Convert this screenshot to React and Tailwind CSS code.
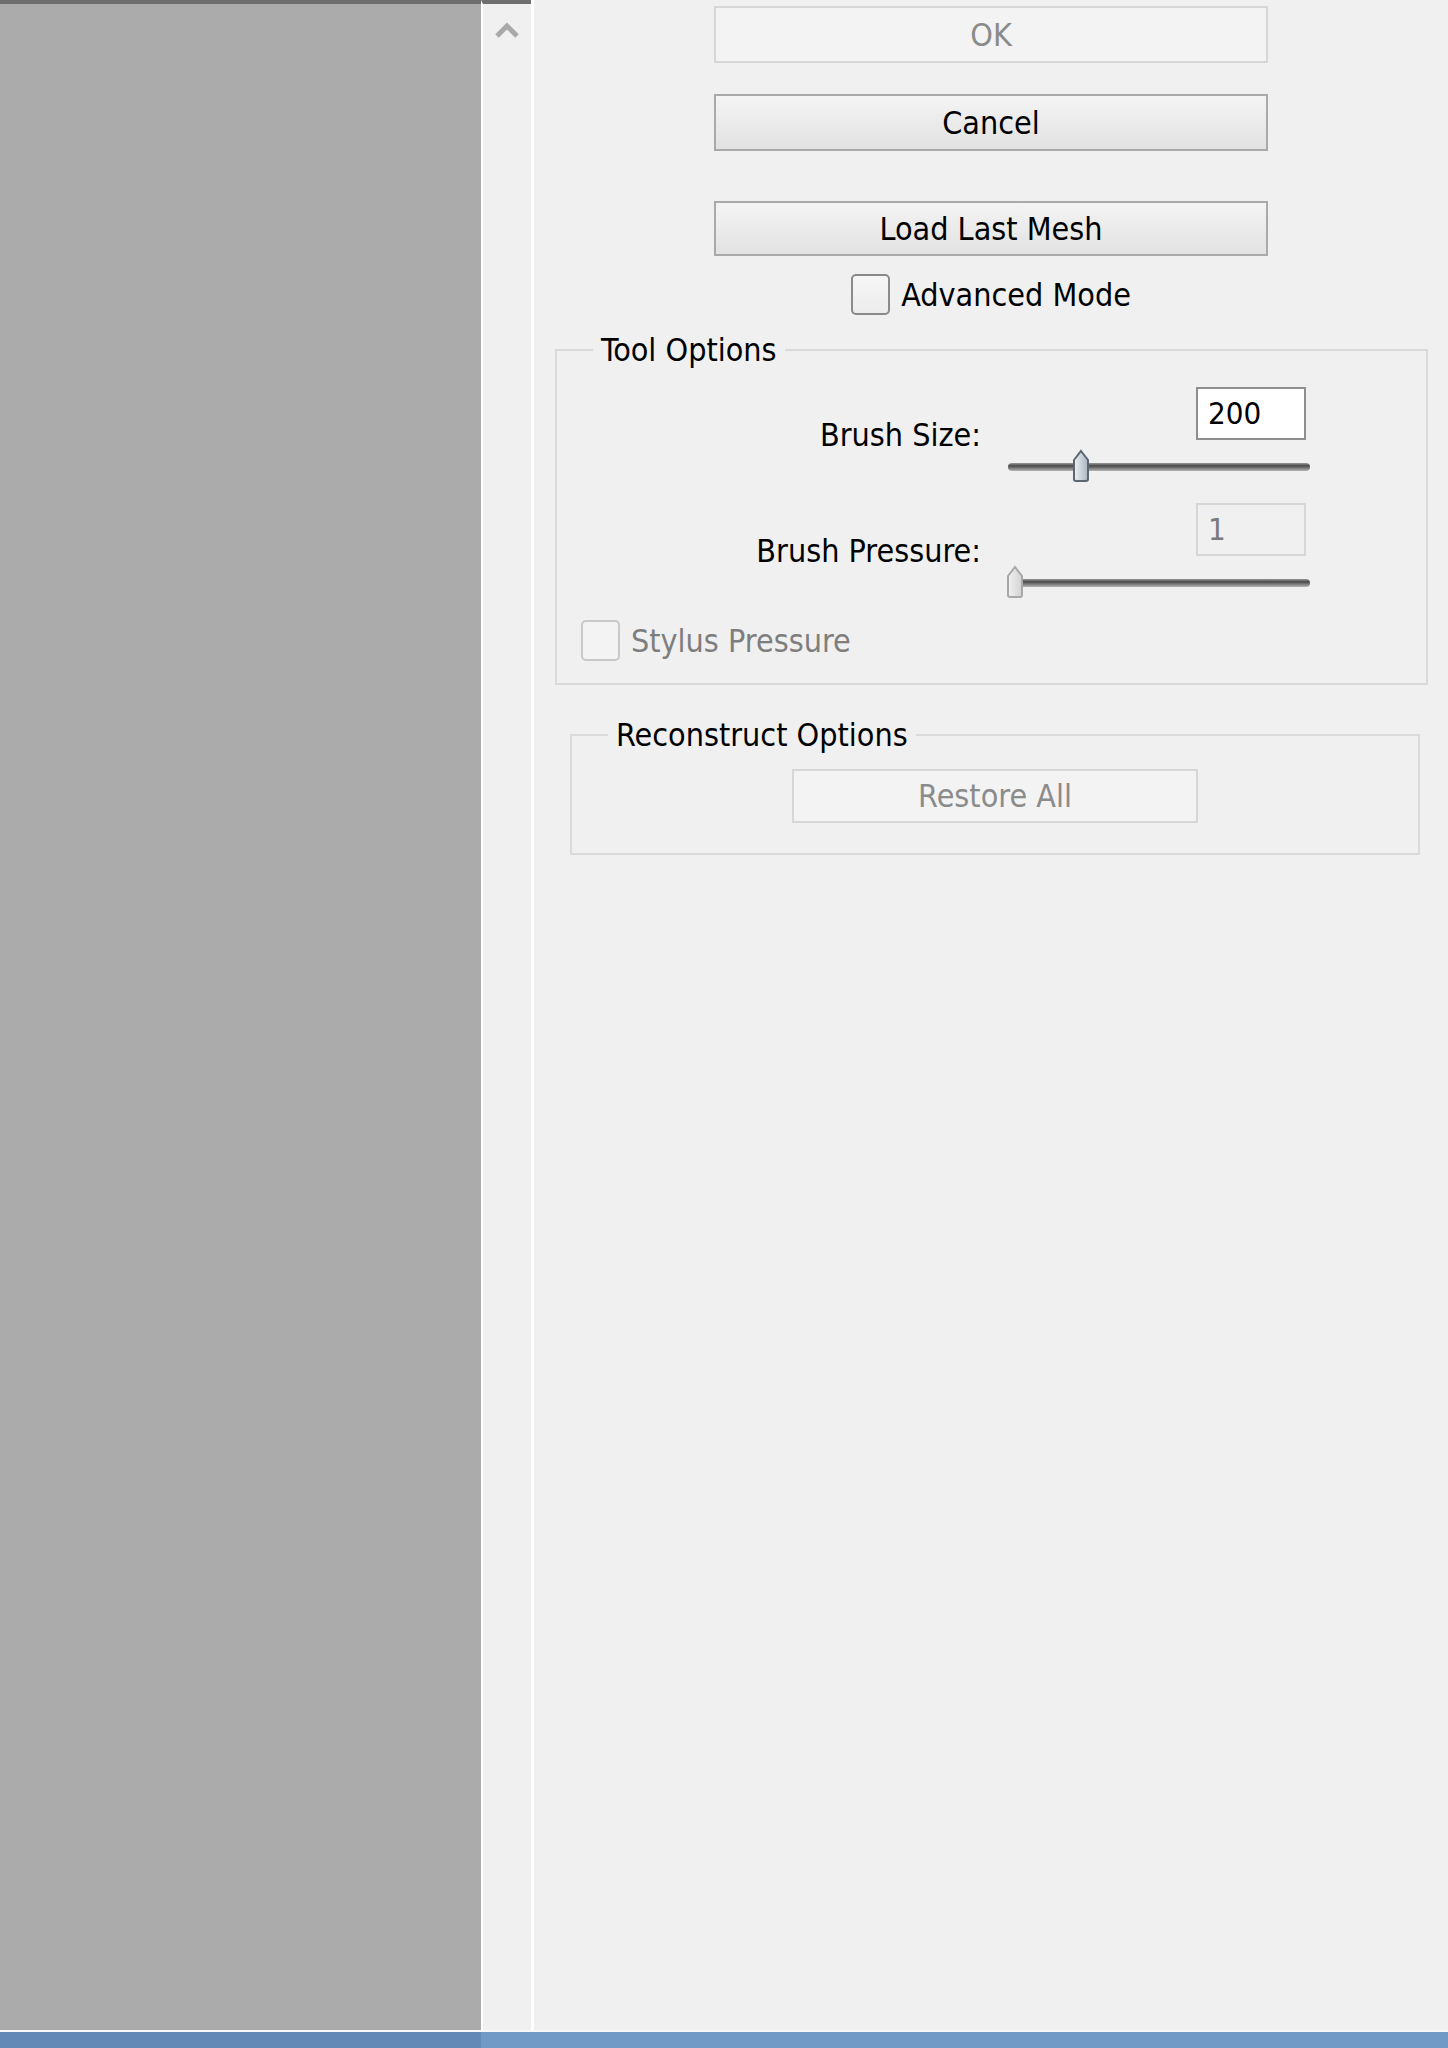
import React from 'react';

const FONT = "font-['Liberation_Sans_Narrow','DejaVu_Sans_Condensed','Liberation_Sans',sans-serif]";

// Push button in the classic Windows look
const PushButton = ({ label, disabled, className = '' }) => (
  <div
    className={`flex items-center justify-center border-2 text-[32px] leading-none ${
      disabled
        ? 'border-[#d6d6d6] bg-[#f3f3f3] text-[#8b8b8b]'
        : 'border-[#a9a9a9] bg-linear-to-b from-[#f4f4f4] to-[#e2e2e2] text-black'
    } ${className}`}
  >
    {label}
  </div>
);

const CheckBox = ({ label, disabled }) => (
  <div className="flex items-center gap-[11px]">
    <div
      className={`h-[41px] w-[39px] rounded-[5px] border-2 ${
        disabled ? 'border-[#c9c9c9] bg-[#f3f3f3]' : 'border-[#8a8a8a] bg-linear-to-b from-[#f6f6f6] to-[#ececec]'
      }`}
    />
    <span className={`text-[32px] leading-none ${disabled ? 'text-[#7e7e7e]' : 'text-black'}`}>{label}</span>
  </div>
);

// Trackbar with a pointed thumb
const Slider = ({ pos, disabled }) => (
  <svg width="304" height="34" viewBox="0 0 304 34" className="block">
    <defs>
      <linearGradient id={`trk${pos}`} x1="0" y1="0" x2="0" y2="1">
        <stop offset="0" stopColor="#9a9a9a" />
        <stop offset="0.35" stopColor="#4a4a4a" />
        <stop offset="1" stopColor="#b5b5b5" />
      </linearGradient>
      <linearGradient id={`thm${pos}`} x1="0" y1="0" x2="1" y2="0">
        <stop offset="0" stopColor={disabled ? '#f2f2f2' : '#eef2f6'} />
        <stop offset="1" stopColor={disabled ? '#d2d2d2' : '#a9b4c0'} />
      </linearGradient>
    </defs>
    <rect x="1" y="14" width="302" height="8" rx="4" fill={`url(#trk${pos})`} />
    <path
      d={`M${pos} 2 L${pos + 7} 11 L${pos + 7} 30 Q${pos + 7} 32 ${pos + 5} 32 L${pos - 5} 32 Q${pos - 7} 32 ${pos - 7} 30 L${pos - 7} 11 Z`}
      fill={`url(#thm${pos})`}
      stroke={disabled ? '#a8a8a8' : '#5c6670'}
      strokeWidth="2"
    />
  </svg>
);

const OptionRow = ({ label, value, pos, disabled }) => (
  <div className="flex items-center">
    <div className="w-[450px] pr-[26px] text-right text-[32px] leading-none text-black">{label}</div>
    <div className="flex w-[304px] flex-col">
      <div
        className={`ml-auto mr-[5px] flex h-[53px] w-[110px] items-center border-2 pl-[10px] text-[31px] leading-none ${
          disabled ? 'border-[#d6d6d6] bg-[#f0f0f0] text-[#7a7a7a]' : 'border-[#8e8e8e] bg-white text-black'
        }`}
      >
        {value}
      </div>
      <div className="mt-[9px]">
        <Slider pos={pos} disabled={disabled} />
      </div>
    </div>
  </div>
);

export default function App() {
  return (
    <div className={`flex h-[2048px] w-[1448px] flex-col overflow-hidden bg-[#f0f0f0] ${FONT}`}>
      <div className="flex min-h-0 flex-1">
        {/* preview canvas */}
        <div className="w-[481px] border-t-4 border-[#6e6e6e] bg-[#ababab]" />
        {/* vertical scrollbar */}
        <div className="flex w-[50px] justify-center border-t-4 border-l-2 border-t-[#6e6e6e] border-l-white bg-[#f0f0f0] pt-[16px]">
          <svg width="26" height="20" viewBox="0 0 26 20">
            <path d="M3 16 L13 6 L23 16" fill="none" stroke="#a9a9a9" strokeWidth="5" />
          </svg>
        </div>
        <div className="w-[3px] bg-white" />

        {/* options panel */}
        <div className="flex flex-1 flex-col pt-[6px]">
          <div className="flex flex-col items-center">
            <PushButton label="OK" disabled className="h-[57px] w-[554px]" />
            <PushButton label="Cancel" className="mt-[31px] h-[57px] w-[554px]" />
            <PushButton label="Load Last Mesh" className="mt-[50px] h-[55px] w-[554px]" />
            <div className="mt-[18px]">
              <CheckBox label="Advanced Mode" />
            </div>
          </div>

          <fieldset className="mt-[15px] ml-[21px] mr-[20px] border-2 border-[#dadada] p-0 pb-[22px]">
            <legend className="ml-[36px] px-[8px] text-[32px] leading-[40px] text-black">Tool Options</legend>
            <div className="mt-[17px] flex flex-col gap-[20px]">
              <OptionRow label="Brush Size:" value="200" pos={74} />
              <OptionRow label="Brush Pressure:" value="1" pos={8} disabled />
            </div>
            <div className="mt-[21px] pl-[24px]">
              <CheckBox label="Stylus Pressure" disabled />
            </div>
          </fieldset>

          <fieldset className="mt-[30px] ml-[36px] mr-[28px] border-2 border-[#dadada] p-0 pb-[30px]">
            <legend className="ml-[36px] px-[8px] text-[32px] leading-[40px] text-black">Reconstruct Options</legend>
            <PushButton label="Restore All" disabled className="mx-auto mt-[14px] h-[54px] w-[406px]" />
          </fieldset>
        </div>
      </div>

      {/* task bar edge */}
      <div className="flex h-[18px] border-t-2 border-[#f8f8f8]">
        <div className="w-[481px] bg-[#6389b7]" />
        <div className="flex-1 bg-[#729ac7]" />
      </div>
    </div>
  );
}
